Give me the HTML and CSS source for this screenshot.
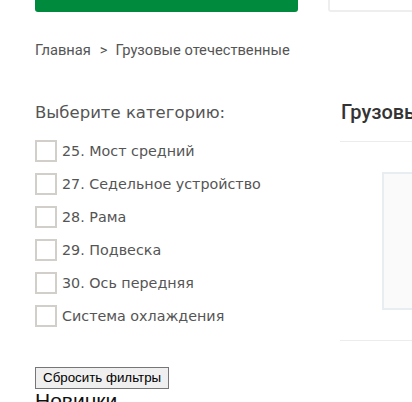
FILE: index.html
```html
<!DOCTYPE html>
<html lang="ru">
<head>
<meta charset="utf-8">
<link rel="stylesheet" href="styles.css">
</head>
<body>
<div class="top">
  <div class="green-bar"></div>
  <div class="search-box"></div>
</div>
<div class="breadcrumb"><span>Главная</span><span class="sep">&gt;</span><span>Грузовые отечественные</span></div>
<div class="main">
  <aside class="sidebar">
    <div class="filter-title">Выберите категорию:</div>
    <ul class="cats">
      <li><span class="box"></span>25. Мост средний</li>
      <li><span class="box"></span>27. Седельное устройство</li>
      <li><span class="box"></span>28. Рама</li>
      <li><span class="box"></span>29. Подвеска</li>
      <li><span class="box"></span>30. Ось передняя</li>
      <li><span class="box"></span>Система охлаждения</li>
    </ul>
    <button class="reset">Сбросить фильтры</button>
    <div class="news">Новинки</div>
  </aside>
  <section class="content">
    <h1 class="page-title">Грузовые отечественные</h1>
    <div class="product-area">
      <div class="card"></div>
    </div>
  </section>
</div>
</body>
</html>
```

FILE: styles.css
```css
html, body {
  margin: 0;
  padding: 0;
  background: #fff;
  overflow: hidden;
}
body {
  width: 412px;
  height: 402px;
  font-family: "Roboto", "Liberation Sans", sans-serif;
}
.top {
  display: flex;
  padding-left: 35px;
  gap: 30px;
}
.green-bar {
  width: 263px;
  height: 12px;
  background: #008a3e;
  border-radius: 0 0 3px 3px;
  flex: none;
}
.search-box {
  flex: none;
  width: 120px;
  height: 10px;
  border: 2px solid #eeeeee;
  border-top: none;
  border-radius: 0 0 3px 3px;
}
.breadcrumb {
  margin: 28px 0 0 35px;
  font-size: 14.7px;
  line-height: 20px;
  color: #555;
  display: flex;
}
.breadcrumb .sep {
  margin: 0 8px 0 9px;
}
.main {
  display: flex;
  padding-left: 35px;
  margin-top: 43px;
}
.sidebar {
  width: 263px;
  flex: none;
  display: flex;
  flex-direction: column;
  align-items: flex-start;
}
.filter-title {
  font-family: "DejaVu Sans", Verdana, sans-serif;
  font-size: 16.5px;
  line-height: 20px;
  color: #555;
}
.cats {
  list-style: none;
  margin: 17px 0 0;
  padding: 0;
  display: flex;
  flex-direction: column;
  gap: 11px;
}
.cats li {
  display: flex;
  align-items: center;
  height: 22px;
  font-family: "DejaVu Sans", Verdana, sans-serif;
  font-size: 14.3px;
  color: #555;
  white-space: nowrap;
}
.box {
  width: 18px;
  height: 18px;
  border: 2px solid #d2cfca;
  margin-right: 5px;
  flex: none;
}
.reset {
  margin-top: 40px;
  font-family: "Liberation Sans", Arial, sans-serif;
  font-size: 13.33px;
  height: 22px;
  padding: 0 7px;
  background: #efefef;
  border: 1px solid #767676;
  color: #000;
  white-space: nowrap;
  line-height: 18px;
}
.news {
  font-family: "Liberation Sans", Arial, sans-serif;
  font-size: 21px;
  line-height: 24px;
  color: #111;
  margin-top: 0px;
}
.content {
  margin-left: 42px;
  flex: none;
  width: 200px;
}
.page-title {
  margin: 0;
  font-family: "Roboto", sans-serif;
  font-weight: 500;
  font-size: 20px;
  line-height: 24px;
  color: #333;
  white-space: nowrap;
  padding-left: 1px;
  margin-top: -3px;
}
.product-area {
  margin-top: 17px;
  border-top: 1px solid #ececec;
  border-bottom: 1px solid #ececec;
  padding: 30px 0 30px 42px;
}
.card {
  height: 134px;
  border: 2px solid #e8edf1;
  border-right: none;
  background: #fafafa;
}
```
